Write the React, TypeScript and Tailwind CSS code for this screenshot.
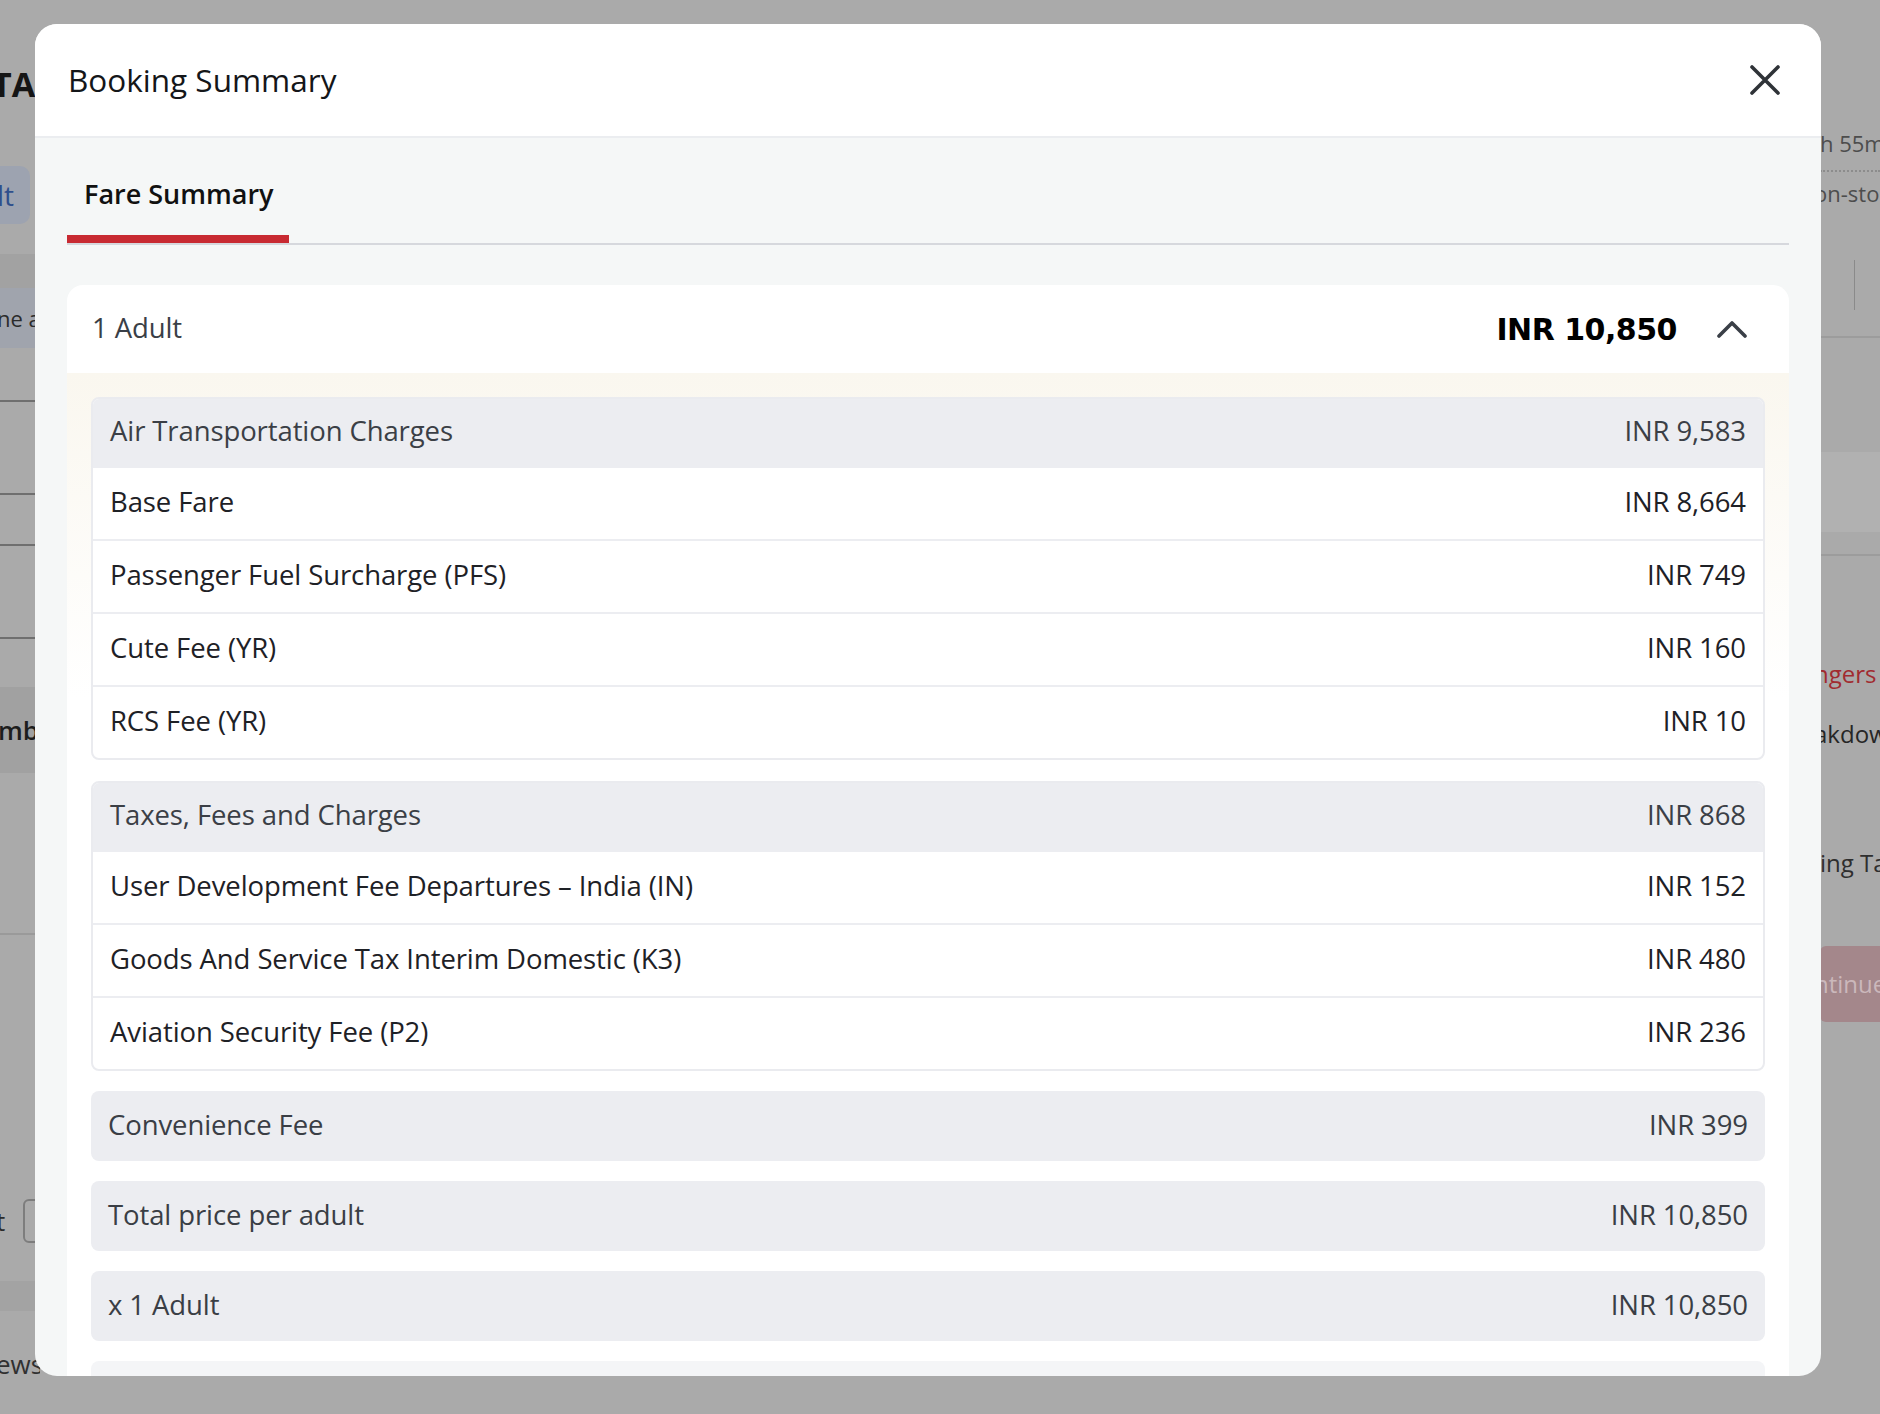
import React from "react";

type Line = { label: string; amount: string };
type Group = { title: string; total: string; lines: Line[] };

const groups: Group[] = [
  {
    title: "Air Transportation Charges",
    total: "INR 9,583",
    lines: [
      { label: "Base Fare", amount: "INR 8,664" },
      { label: "Passenger Fuel Surcharge (PFS)", amount: "INR 749" },
      { label: "Cute Fee (YR)", amount: "INR 160" },
      { label: "RCS Fee (YR)", amount: "INR 10" },
    ],
  },
  {
    title: "Taxes, Fees and Charges",
    total: "INR 868",
    lines: [
      { label: "User Development Fee Departures – India (IN)", amount: "INR 152" },
      { label: "Goods And Service Tax Interim Domestic (K3)", amount: "INR 480" },
      { label: "Aviation Security Fee (P2)", amount: "INR 236" },
    ],
  },
];

const summaryRows: Line[] = [
  { label: "Convenience Fee", amount: "INR 399" },
  { label: "Total price per adult", amount: "INR 10,850" },
  { label: "x 1 Adult", amount: "INR 10,850" },
];

const sans = "font-['Open_Sans','Liberation_Sans',sans-serif]";

// Bits of the page behind the dimmed backdrop, peeking out on either side of the dialog.
function BackdropPage() {
  return (
    <div className={`flex h-full justify-between ${sans}`}>
      <div className="flex w-[40px] flex-col overflow-hidden">
        <div className="h-[62px]" />
        <div className="-ml-[8px] h-[44px] whitespace-nowrap text-[34px] leading-[44px] font-bold text-[#151515]">
          TA
        </div>
        <div className="h-[60px]" />
        <div className="flex h-[58px] w-[30px] items-center rounded-r-[10px] bg-[#9da3b0]">
          <span className="-ml-[3px] text-[28px] text-[#2f4f8c]">lt</span>
        </div>
        <div className="mt-[30px] h-[34px] bg-[#a2a2a2]" />
        <div className="flex h-[60px] items-center bg-[#a0a4ad]">
          <span className="-ml-[3px] whitespace-nowrap text-[22px] text-[#2b2b2b]">ne a</span>
        </div>
        <div className="mt-[52px] h-[2px] bg-[#6f6f6f]" />
        <div className="mt-[91px] h-[2px] bg-[#6f6f6f]" />
        <div className="mt-[49px] h-[2px] bg-[#6f6f6f]" />
        <div className="mt-[91px] h-[2px] bg-[#6f6f6f]" />
        <div className="mt-[48px] flex h-[86px] items-center bg-[#a1a1a1]">
          <span className="-ml-[2px] whitespace-nowrap text-[26px] font-semibold text-[#1d1d1d]">mbe</span>
        </div>
        <div className="mt-[160px] h-[2px] bg-[#9a9a9a]" />
        <div className="mt-[264px] flex h-[44px] items-center gap-[18px]">
          <span className="-ml-[4px] text-[26px] text-[#2b2b2b]">t</span>
          <span className="h-[44px] w-[20px] rounded-l-[6px] border-2 border-[#7d7d7d]" />
        </div>
        <div className="mt-[38px] h-[30px] bg-[#a3a3a3]" />
        <div className="mt-[34px] -ml-[4px] whitespace-nowrap text-[26px] text-[#303030]">ews</div>
      </div>

      <div className="flex w-[66px] flex-col overflow-hidden pl-[6px]">
        <div className="h-[126px]" />
        <div className="whitespace-nowrap text-[22px] leading-[34px] text-[#4d4d4d]">h 55m</div>
        <div className="mt-[10px] border-t-2 border-dotted border-[#8c8c8c]" />
        <div className="mt-[4px] -ml-[6px] whitespace-nowrap text-[22px] leading-[34px] text-[#4d4d4d]">
          on-stop
        </div>
        <div className="mt-[50px] ml-[34px] h-[50px] w-px bg-[#8a8a8a]" />
        <div className="mt-[26px] h-[2px] bg-[#9c9c9c]" />
        <div className="mt-[114px] h-[80px] bg-[#b1b1b1]" />
        <div className="mt-[22px] h-[2px] bg-[#9c9c9c]" />
        <div className="mt-[101px] -ml-[6px] whitespace-nowrap text-[24px] leading-[34px] text-[#a12b30]">
          ngers
        </div>
        <div className="mt-[26px] -ml-[6px] whitespace-nowrap text-[24px] leading-[34px] text-[#262626]">
          akdown
        </div>
        <div className="mt-[95px] whitespace-nowrap text-[24px] leading-[34px] font-medium text-[#2e2e2e]">
          ing Ta
        </div>
        <div className="mt-[66px] flex h-[76px] items-center rounded-l-[6px] bg-[#a4878b]">
          <span className="-ml-[6px] whitespace-nowrap text-[24px] text-[#cbb8bb]">ntinue</span>
        </div>
      </div>
    </div>
  );
}

function ChevronUp() {
  return (
    <svg width="30" height="18" viewBox="0 0 30 18" fill="none" className="ml-[40px]">
      <path d="M2 16 L15 3 L28 16" stroke="#3a3f47" strokeWidth="3.6" strokeLinecap="round" strokeLinejoin="round" />
    </svg>
  );
}

function CloseIcon() {
  return (
    <svg width="30" height="30" viewBox="0 0 30 30" fill="none">
      <path d="M2 2 L28 28 M28 2 L2 28" stroke="#2f3338" strokeWidth="3.6" strokeLinecap="round" />
    </svg>
  );
}

function FareGroup({ group }: { group: Group }) {
  return (
    <div className="overflow-hidden rounded-[8px] border-2 border-[#eaebef] bg-white">
      <div className="flex h-[67px] items-center justify-between bg-[#ecedf1] px-[17px] pb-[3px] text-[#3b3f46]">
        <span>{group.title}</span>
        <span>{group.total}</span>
      </div>
      {group.lines.map((line) => (
        <div
          key={line.label}
          className="flex h-[73px] items-center justify-between border-t-2 border-[#ecedf1] px-[17px] pb-[3px] text-[#1e2126]"
        >
          <span>{line.label}</span>
          <span>{line.amount}</span>
        </div>
      ))}
    </div>
  );
}

export default function App() {
  return (
    <div className="relative h-[1414px] w-[1880px] overflow-hidden bg-[#aaaaaa]">
      <BackdropPage />

      {/* Dialog */}
      <div
        className={`absolute top-[24px] left-[35px] flex h-[1352px] w-[1786px] flex-col overflow-hidden rounded-[22px] bg-[#f5f7f7] ${sans}`}
      >
        <div className="flex h-[114px] shrink-0 items-center justify-between border-b-2 border-[#ebedf0] bg-white pr-[41px] pl-[33px]">
          <h2 className="text-[31.5px] font-normal text-[#141619]">Booking Summary</h2>
          <CloseIcon />
        </div>

        <div className="flex flex-col px-[32px]">
          {/* Tabs */}
          <div className="flex border-b-2 border-[#d6d8dd]">
            <div className="border-b-8 border-[#c82a32] pt-[37px] pr-[15px] pb-[22px] pl-[17px]">
              <span className="block text-[27px] leading-[38px] font-semibold text-[#111]">Fare Summary</span>
            </div>
          </div>

          {/* Passenger fare card */}
          <div className="mt-[40px] rounded-t-[16px] bg-white text-[27.5px] tracking-[-0.1px]">
            <div className="flex h-[88px] items-center justify-between pr-[42px] pl-[25px]">
              <span className="pb-[2px] text-[#3a3f47]">1 Adult</span>
              <div className="flex items-center">
                <span className="font-['DejaVu_Sans',sans-serif] text-[30px] font-bold tracking-[-0.5px] text-black">
                  INR 10,850
                </span>
                <ChevronUp />
              </div>
            </div>

            <div className="flex flex-col gap-5 bg-linear-to-b from-[#faf7ef] to-white to-30% px-[24px] pt-[24px] pb-[24px]">
              <FareGroup group={groups[0]} />
              <div className="mt-[1px]">
                <FareGroup group={groups[1]} />
              </div>
              {summaryRows.map((row) => (
                <div
                  key={row.label}
                  className="flex h-[70px] items-center justify-between rounded-[8px] bg-[#ecedf1] px-[17px] pb-[2px] text-[#3a3e45]"
                >
                  <span>{row.label}</span>
                  <span>{row.amount}</span>
                </div>
              ))}
              <div className="flex h-[70px] items-center justify-between rounded-[8px] bg-[#f4f5f7] px-[17px] font-semibold text-[#1e2126]">
                <span>Total Amount</span>
                <span>INR 10,850</span>
              </div>
            </div>
          </div>
        </div>
      </div>
    </div>
  );
}
